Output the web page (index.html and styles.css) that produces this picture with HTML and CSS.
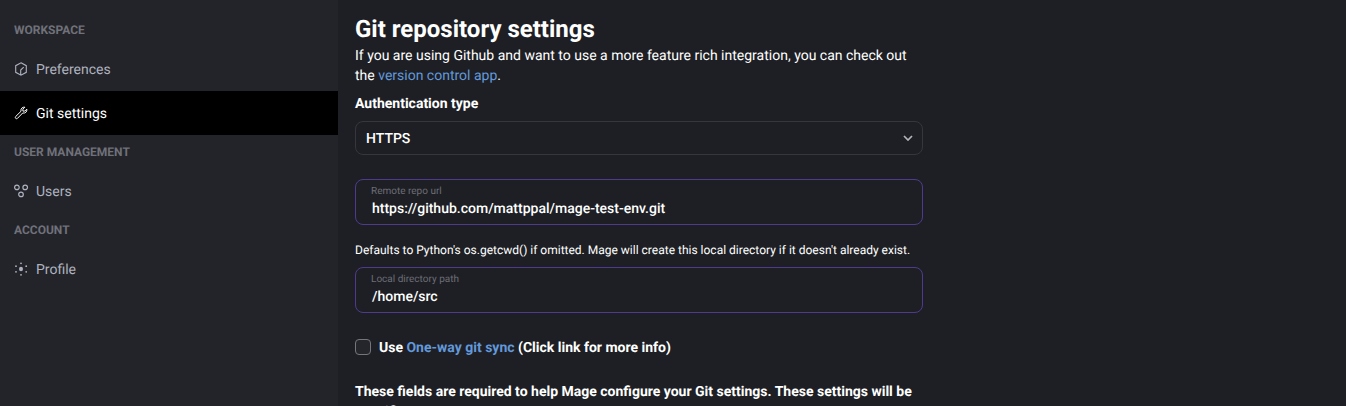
FILE: index.html
```html
<!DOCTYPE html>
<html lang="en">
<head>
<meta charset="utf-8">
<title>Git repository settings</title>
<link rel="stylesheet" href="styles.css">
</head>
<body>
<div class="app">
  <nav class="sidebar">
    <div class="nav-heading">WORKSPACE</div>
    <a class="nav-item">
      <svg class="icon" viewBox="0 0 14 14"><path d="M7 .8 12.3 3.7V10.3L7 13.2 1.7 10.3V3.7ZM6.7 13V8L9.7 5.2"/></svg>
      <span class="row-text">Preferences</span>
    </a>
    <a class="nav-item active">
      <svg class="icon wrench" viewBox="0 0 14 14"><path d="M10.9 1.2 8.9 3.2V5.1H10.8L12.8 3.1C13.3 5.7 11.3 7.6 8.7 7L3.5 12.3C2.2 13.5.5 11.8 1.7 10.5L7 5.3C6.4 2.7 8.5.7 10.9 1.2Z"/></svg>
      <span class="row-text">Git settings</span>
    </a>
    <div class="nav-heading">USER MANAGEMENT</div>
    <a class="nav-item">
      <svg class="icon" viewBox="0 0 14 14"><g class="users"><circle cx="2.9" cy="3.4" r="2.3"/><circle cx="11.2" cy="3.4" r="2.3"/><circle cx="7" cy="10.4" r="2.3"/></g></svg>
      <span class="row-text">Users</span>
    </a>
    <div class="nav-heading">ACCOUNT</div>
    <a class="nav-item">
      <svg class="icon" viewBox="0 0 14 14"><g class="dots"><ellipse cx="7" cy="7" rx="2" ry="2.3"/><circle cx="7" cy="1.3" r=".9"/><circle cx="7" cy="12.8" r=".9"/><circle cx="2" cy="4.2" r=".9"/><circle cx="12.2" cy="4.2" r=".9"/><circle cx="2" cy="9.8" r=".9"/><circle cx="12.2" cy="9.8" r=".9"/></g></svg>
      <span class="row-text">Profile</span>
    </a>
  </nav>
  <main class="content">
    <h1 class="title">Git repository settings</h1>
    <p class="intro">If you are using Github and want to use a more feature rich integration, you can check out the <a class="link">version control app</a>.</p>
    <div class="label">Authentication type</div>
    <div class="select">
      <span class="row-text">HTTPS</span>
      <svg class="chevron" viewBox="0 0 10 6"><path d="M1 1 5 5 9 1"/></svg>
    </div>
    <div class="field">
      <span class="field-label">Remote repo url</span>
      <span class="field-value">https://github.com/mattppal/mage-test-env.git</span>
    </div>
    <p class="hint">Defaults to Python's os.getcwd() if omitted. Mage will create this local directory if it doesn't already exist.</p>
    <div class="field path">
      <span class="field-label">Local directory path</span>
      <span class="field-value">/home/src</span>
    </div>
    <div class="check-row">
      <span class="checkbox"></span>
      <span class="row-text">Use <a class="link">One-way git sync</a> (Click link for more info)</span>
    </div>
    <p class="note">These fields are required to help Mage configure your Git settings. These settings will be specific</p>
  </main>
</div>
</body>
</html>
```
FILE: styles.css
```css
* { box-sizing: border-box; }
body { margin: 0; background: #1e1f24; color: #fff; font: 14px/20px Roboto, sans-serif; text-rendering: geometricPrecision; }
p, h1 { margin: 0; }
.app { display: flex; height: 406px; overflow: hidden; }
.sidebar { width: 338px; flex: none; background: #232429; padding-top: 13px; }
.nav-heading { height: 34px; padding-left: 14px; font-size: 12px; font-weight: 700; line-height: 34px; color: #70717a; }
.nav-item { display: flex; align-items: center; gap: 8px; height: 44px; padding-left: 14px; color: #aeb2bf; }
.nav-item.active { background: #000; color: #fff; }
.row-text { padding-top: 2px; }
.icon { width: 14px; height: 14px; flex: none; fill: none; stroke: currentColor; stroke-width: 1.1; overflow: visible; }
.wrench { stroke-width: 1; }
.users { stroke-width: 1.2; }
.dots { fill: currentColor; stroke: none; }
.content { width: 585px; padding: 13px 0 0 17px; flex: none; }
.title { height: 33px; font-size: 24px; line-height: 32px; font-weight: 700; }
.link { color: #6299db; }
.label { margin-top: 8px; font-weight: 700; }
.select { display: flex; align-items: center; justify-content: space-between; height: 34px; margin-top: 7px; padding: 0 9px 0 10px; border: 1px solid #36373d; border-radius: 8px; font-weight: 500; }
.chevron { width: 10px; height: 6px; fill: none; stroke: #b4b5bb; stroke-width: 1.7; }
.field { display: flex; flex-direction: column; height: 46px; margin-top: 24px; padding: 5px 15px 4px; border: 1px solid #4e3b8e; border-radius: 8px; }
.field-label { height: 14px; font-size: 10px; line-height: 14px; color: #6c6d76; }
.field-value { padding-left: 1px; font-weight: 500; line-height: 20px; }
.hint { margin-top: 15px; font-size: 12px; line-height: 20px; }
.path { margin-top: 7px; }
.check-row { display: flex; align-items: center; gap: 8px; height: 20px; margin-top: 24px; font-weight: 700; }
.checkbox { width: 16px; height: 16px; background: #25262b; border: 1px solid #75767c; border-radius: 4px; }
.note { margin-top: 25px; font-weight: 700; }
```
